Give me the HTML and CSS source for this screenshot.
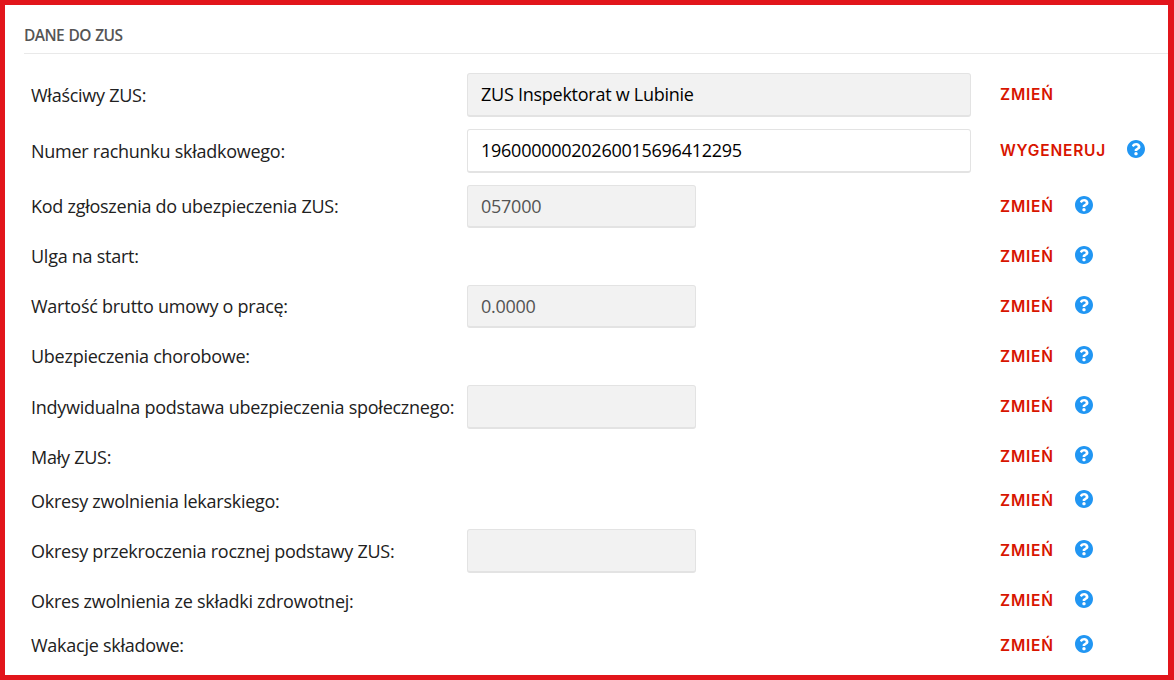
FILE: index.html
```html
<!DOCTYPE html>
<html lang="pl">
<head>
  <meta charset="UTF-8" />
  <meta name="viewport" content="width=device-width, initial-scale=1.0" />
  <title>Dane do ZUS</title>
  <link rel="stylesheet" href="styles.css">
</head>
<body>
  <svg width="0" height="0" class="sprite">
    <symbol id="help" viewBox="8 8 496 496">
      <path fill="#2196f3" d="M504 256c0 136.997-111.043 248-248 248S8 392.997 8 256C8 119.083 119.043 8 256 8s248 111.083 248 248zM262.655 90c-54.497 0-89.255 22.957-116.549 63.758-3.536 5.286-2.353 12.415 2.715 16.258l34.699 26.31c5.205 3.947 12.621 3.008 16.665-2.122 17.864-22.658 30.113-35.797 57.303-35.797 20.429 0 45.698 13.148 45.698 32.958 0 14.976-12.363 22.667-32.534 33.976C247.128 238.528 216 254.941 216 296v4c0 6.627 5.373 12 12 12h56c6.627 0 12-5.373 12-12v-1.333c0-28.462 83.186-29.647 83.186-106.667 0-58.002-60.165-102-116.531-102zM256 338c-25.365 0-46 20.635-46 46 0 25.364 20.635 46 46 46s46-20.636 46-46c0-25.364-20.635-46-46-46z" />
    </symbol>
  </svg>

  <div class="panel">
    <h2>DANE DO ZUS</h2>

    <form class="zus-form">
      <div class="row with-input">
        <label>Właściwy ZUS:</label>
        <div class="field"><input type="text" class="wide gray" value="ZUS Inspektorat w Lubinie" readonly /></div>
        <div class="actions"><a class="link">ZMIEŃ</a></div>
      </div>
      <div class="row with-input">
        <label>Numer rachunku składkowego:</label>
        <div class="field"><input type="text" class="wide" value="19600000020260015696412295" /></div>
        <div class="actions"><a class="link generate">WYGENERUJ</a><svg class="help"><use href="#help" /></svg></div>
      </div>
      <div class="row with-short">
        <label>Kod zgłoszenia do ubezpieczenia ZUS:</label>
        <div class="field"><input type="text" class="low" value="057000" disabled /></div>
        <div class="actions"><a class="link">ZMIEŃ</a><svg class="help"><use href="#help" /></svg></div>
      </div>
      <div class="row after-short">
        <label>Ulga na start:</label>
        <div class="field"></div>
        <div class="actions"><a class="link">ZMIEŃ</a><svg class="help"><use href="#help" /></svg></div>
      </div>
      <div class="row with-short">
        <label>Wartość brutto umowy o pracę:</label>
        <div class="field"><input type="text" class="low" value="0.0000" disabled /></div>
        <div class="actions"><a class="link">ZMIEŃ</a><svg class="help"><use href="#help" /></svg></div>
      </div>
      <div class="row after-short">
        <label>Ubezpieczenia chorobowe:</label>
        <div class="field"></div>
        <div class="actions"><a class="link">ZMIEŃ</a><svg class="help"><use href="#help" /></svg></div>
      </div>
      <div class="row with-input">
        <label>Indywidualna podstawa ubezpieczenia społecznego:</label>
        <div class="field"><input type="text" disabled /></div>
        <div class="actions"><a class="link">ZMIEŃ</a><svg class="help"><use href="#help" /></svg></div>
      </div>
      <div class="row">
        <label>Mały ZUS:</label>
        <div class="field"></div>
        <div class="actions"><a class="link">ZMIEŃ</a><svg class="help"><use href="#help" /></svg></div>
      </div>
      <div class="row">
        <label>Okresy zwolnienia lekarskiego:</label>
        <div class="field"></div>
        <div class="actions"><a class="link">ZMIEŃ</a><svg class="help"><use href="#help" /></svg></div>
      </div>
      <div class="row with-input">
        <label>Okresy przekroczenia rocznej podstawy ZUS:</label>
        <div class="field"><input type="text" disabled /></div>
        <div class="actions"><a class="link">ZMIEŃ</a><svg class="help"><use href="#help" /></svg></div>
      </div>
      <div class="row">
        <label>Okres zwolnienia ze składki zdrowotnej:</label>
        <div class="field"></div>
        <div class="actions"><a class="link">ZMIEŃ</a><svg class="help"><use href="#help" /></svg></div>
      </div>
      <div class="row last">
        <label>Wakacje składowe:</label>
        <div class="field"></div>
        <div class="actions"><a class="link">ZMIEŃ</a><svg class="help"><use href="#help" /></svg></div>
      </div>
    </form>
  </div>
</body>
</html>
```

FILE: styles.css
```css
* {
  box-sizing: border-box;
}

body {
  margin: 0;
  font-family: "Open Sans", sans-serif;
  font-size: 18px;
  letter-spacing: -0.26px;
  color: #212121;
  background: #fff;
}

.sprite {
  display: none;
}

.panel {
  height: 680px;
  border: 5px solid #e2151b;
  border-right-width: 6px;
  padding: 15px 0 0 19px;
  overflow: hidden;
}

h2 {
  height: 34px;
  margin: 0 0 13px;
  border-bottom: 1px solid #e9e9e9;
  font-size: 15.5px;
  font-weight: 600;
  line-height: 30px;
  letter-spacing: -0.6px;
  word-spacing: 1px;
  color: #555;
}

.row {
  display: grid;
  grid-template-columns: 436px 533px 1fr;
  align-items: center;
  height: 44px;
  padding-left: 7px;
}

.with-input {
  height: 56px;
}

.with-short {
  height: 55px;
}

.after-short {
  height: 45px;
}

label {
  white-space: nowrap;
  line-height: 24px;
}

.with-short label,
.after-short label {
  padding-bottom: 1px;
}

.field {
  display: flex;
}

input {
  width: 229px;
  height: 44px;
  padding: 0 13px 1px;
  border: 1px solid #e3e3e3;
  border-bottom-width: 2px;
  border-radius: 3px;
  font-family: inherit;
  font-size: 18px;
  letter-spacing: inherit;
  color: #000;
  background: #fff;
}

input.wide {
  width: 504px;
}

input.low {
  height: 43px;
  padding-bottom: 0;
}

input.gray,
input:disabled {
  background: #f2f2f2;
}

input:disabled {
  color: #545454;
}

.actions {
  display: flex;
  align-items: center;
}

.link {
  width: 54px;
  font-family: Inter, sans-serif;
  font-size: 15.5px;
  font-weight: 600;
  line-height: 22px;
  letter-spacing: 0.8px;
  color: #d81500;
}

.generate {
  width: 106px;
}

.help {
  width: 18px;
  height: 18px;
  margin: 0 0 4px 21px;
}

.last .actions {
  padding-top: 1px;
}
```
